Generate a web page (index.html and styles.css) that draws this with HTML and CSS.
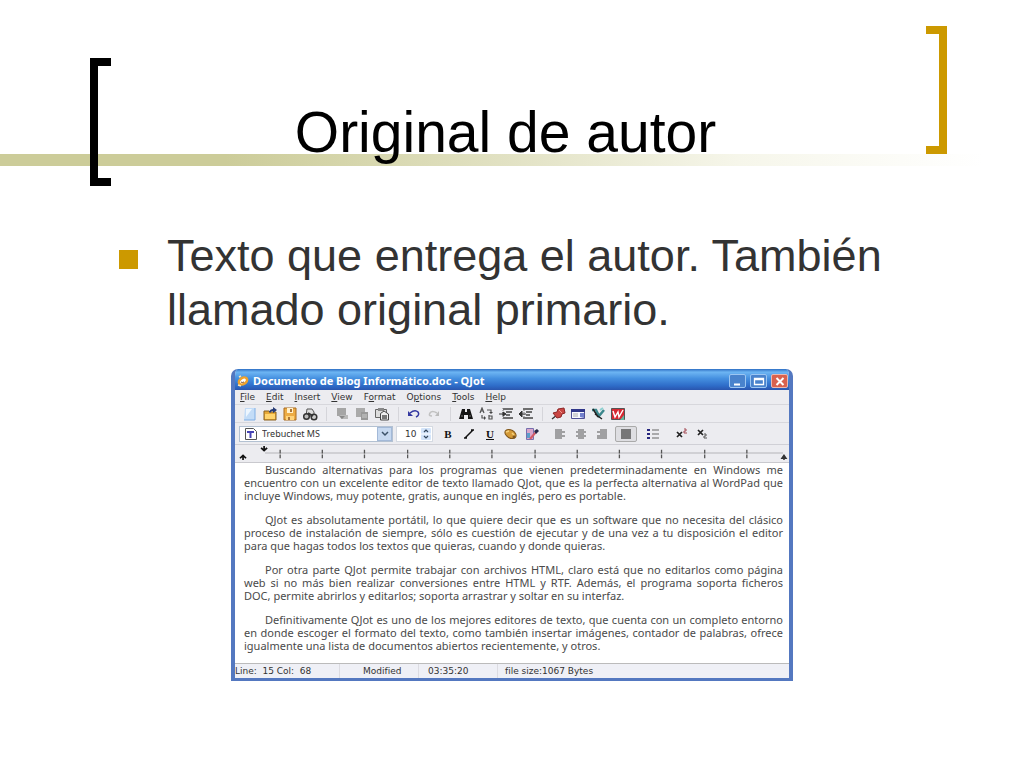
FILE: index.html
```html
<!DOCTYPE html>
<html lang="es">
<head>
<meta charset="utf-8">
<title>Original de autor</title>
<link rel="stylesheet" href="styles.css">
</head>
<body>
<main class="slide">
  <header class="slide-header">
    <span class="bracket bracket-left"></span>
    <h1>Original de autor</h1>
    <span class="bracket bracket-right"></span>
  </header>
  <ul class="points">
    <li>Texto que entrega el autor. También<br>llamado original primario.</li>
  </ul>
  <section class="window" aria-label="QJot">
    <div class="titlebar">
      <svg class="logo" width="14" height="14" viewBox="0 0 14 14"><ellipse cx="7" cy="7" rx="4.500" ry="3" transform="rotate(-35 7 7)" fill="#fff" stroke="#f0a22c" stroke-width="2.600"/><path d="M2 11l3 1M3 3l2-1" stroke="#ffe7b5" stroke-width="1.500"/><path d="M5 8q1 1 3 0" fill="none" stroke="#7c4a22"/></svg>
      <h2>Documento de Blog Informático.doc - QJot</h2>
      <button class="win" aria-label="Minimizar"><svg width="16" height="13"><path d="M4 9.500h6" stroke="#fff" stroke-width="2"/></svg></button>
      <button class="win" aria-label="Maximizar"><svg width="16" height="13"><path d="M3.500 3.500h9v6h-9zM3 4.500h10" fill="none" stroke="#fff" stroke-width="1.300"/></svg></button>
      <button class="win close" aria-label="Cerrar"><svg width="16" height="13"><path d="M4.500 3l7 7m0-7l-7 7" stroke="#fff" stroke-width="2"/></svg></button>
    </div>
    <nav class="menu">
      <button><u>F</u>ile</button><button><u>E</u>dit</button><button><u>I</u>nsert</button><button><u>V</u>iew</button><button>F<u>o</u>rmat</button><button>O<u>p</u>tions</button><button><u>T</u>ools</button><button><u>H</u>elp</button>
    </nav>
    <div class="toolbar files">
      <div class="group">
        <button aria-label="Nuevo"><svg viewBox="0 0 16 14"><path d="M3 1h10v12H2z" fill="#c3dcf7"/><path d="M4 2h6l-6 8z" fill="#edf6ff"/><path d="M13 1v12H2" fill="none" stroke="#7eaee4"/></svg></button>
        <button aria-label="Abrir"><svg viewBox="0 0 16 14"><path d="M2 4h5l1 1h6v8H2z" fill="#e7a936" stroke="#89611f"/><path d="M3 7h10v5H3z" fill="#ffd46d"/><path d="M7 5q1-3 4-3V0l4 3-4 3V4q-2 0-3 2z" fill="#263b75"/></svg></button>
        <button aria-label="Guardar"><svg viewBox="0 0 16 14"><path d="M2 1h12v12H2z" fill="#edac45" stroke="#a86b20"/><path d="M5 1h6v5H5z" fill="#fff0cd"/><path d="M4 9h8v4H4z" fill="#ffd47c"/><path d="M8 2h2v3H8zM6 10h2v3H6z" fill="#a77438"/></svg></button>
        <button aria-label="Buscar archivo"><svg viewBox="0 0 16 14"><path d="M5 2h5l2 3v4H4z" fill="#ddd" stroke="#555"/><circle cx="4.500" cy="9.500" r="2.800" fill="#bbb" stroke="#333" stroke-width="1.500"/><circle cx="12" cy="10" r="2.800" fill="#ccc" stroke="#333" stroke-width="1.500"/><path d="M6 6l5 3" stroke="#333" stroke-width="2"/></svg></button>
      </div>
      <div class="group">
        <button aria-label="Cortar"><svg viewBox="0 0 16 14"><path d="M3 1h9v8H3z" fill="#a5a5a5"/><path d="M6 8h8v4H7z" fill="#b9b9b9"/><path d="M5 9l3 3 3-3" fill="#888"/></svg></button>
        <button aria-label="Copiar"><svg viewBox="0 0 16 14"><path d="M2 1h9v9H2z" fill="#aaa"/><path d="M7 5h7v8H7z" fill="#999"/><path d="M8 8h5m-5 2h5" stroke="#ccc"/></svg></button>
        <button aria-label="Pegar"><svg viewBox="0 0 16 14"><path d="M1.500 2.500h11v8h-11z" fill="#ddd" stroke="#666"/><path d="M4 1h6v3H4z" fill="#888"/><path d="M6.500 6.500L10 4l4.500 3v6h-8z" fill="#eee" stroke="#444"/><path d="M8 8h5v4H8z" fill="#777"/></svg></button>
      </div>
      <div class="group">
        <button aria-label="Deshacer"><svg viewBox="0 0 16 14"><path d="M4 6q5-4 8-1 2 3-2 5" fill="none" stroke="#3438a0" stroke-width="1.500"/><path d="M2 4v5h5z" fill="#3438a0"/></svg></button>
        <button aria-label="Rehacer"><svg viewBox="0 0 16 14"><path d="M11 6Q6 3 4 6t2 3" fill="none" stroke="#c2c2c2" stroke-width="1.500"/><path d="M13 4v5H9z" fill="#bbb"/></svg></button>
      </div>
      <div class="group">
        <button aria-label="Buscar"><svg viewBox="0 0 16 14"><path d="M4 2h3v3h2V2h3l3 10h-5V8H6v4H1z" fill="#151515"/><path d="M3 9h2m6 0h2" stroke="#777"/></svg></button>
        <button aria-label="Reemplazar"><svg viewBox="0 0 16 14"><path d="M2 6l2-5 2 5M3 4h2M9 3h4v3M4 8v3h3M11 8v4h3V9h-3" fill="none" stroke="#555" stroke-width="1.200"/><path d="M11 5h4l-2 2zM6 9v4l2-2z" fill="#444"/></svg></button>
        <button aria-label="Aumentar sangría"><svg viewBox="0 0 16 14"><path d="M5 2h10M8 5h6M8 8h4M5 11h10" stroke="#444" stroke-width="1.600"/><path d="M5 1v12" stroke="#777" stroke-dasharray="1 1"/><path d="M1 7h6M5 5l3 2-3 2z" fill="#333" stroke="#333"/></svg></button>
        <button aria-label="Reducir sangría"><svg viewBox="0 0 16 14"><path d="M5 2h10M8 5h6M8 8h4M5 11h10" stroke="#444" stroke-width="1.600"/><path d="M6 1v12" stroke="#777" stroke-dasharray="1 1"/><path d="M2 7h6M4 4L1 7l3 3z" fill="#333" stroke="#333"/></svg></button>
      </div>
      <div class="group last">
        <button aria-label="Fijar"><svg viewBox="0 0 16 14"><path d="M2 12l5-4" stroke="#333" stroke-width="1.500"/><path d="M8 2l6-1 1 5-3 1-1 3-4 1-4-5 4-1z" fill="#c94643" stroke="#8e2727"/><path d="M9 3l3 3" stroke="#f29a91"/></svg></button>
        <button aria-label="Fecha"><svg viewBox="0 0 16 14"><path d="M1.500 2.500h13v9h-13z" fill="#f8f8ff" stroke="#505095"/><path d="M1 2h14v3H1z" fill="#30378a"/><path d="M3 7h5m-5 2h5" stroke="#aaa"/><path d="M10 6h4v5l-4-1z" fill="#7381ce"/></svg></button>
        <button aria-label="Opciones"><svg viewBox="0 0 16 14"><path d="M2 3h4l3 6 5-6" fill="none" stroke="#3b878c" stroke-width="2.500"/><path d="M5 7l7 5M3 2l5 8" stroke="#222" stroke-width="1.500"/><path d="M10 3l3-2" stroke="#8bd0d0" stroke-width="2"/></svg></button>
        <button aria-label="WordPad"><svg viewBox="0 0 16 14"><path d="M1.500 1.500h13v11h-13z" fill="#d72932" stroke="#555"/><path d="M10 13l4-5v5z" fill="#64b9a2"/><path d="M3 4l2 6 3-5 1 5 4-7" fill="none" stroke="#fff" stroke-width="1.400"/></svg></button>
      </div>
    </div>
    <div class="toolbar format">
      <label class="font-box"><svg viewBox="0 0 16 14"><path d="M2.500 1.500h8l3 3v8h-11z" fill="#fff" stroke="#555"/><path d="M4 5h7M7.500 5v6" stroke="#4643b4" stroke-width="2"/></svg><select aria-label="Fuente"><option>Trebuchet MS</option></select><span class="drop"><svg viewBox="0 0 12 12"><path d="M3 4l3 3 3-3" fill="none" stroke="#3c5269" stroke-width="1.500"/></svg></span></label>
      <label class="size-box"><input aria-label="Tamaño" value="10"><svg viewBox="0 0 12 14"><rect x="1" y="1" width="10" height="12" rx="1" fill="#d3e4fa"/><path d="M1 7h10" stroke="#fff"/><path d="M4 5l2-2 2 2M4 9l2 2 2-2" fill="none" stroke="#34475c" stroke-width="1.200"/></svg></label>
      <div class="group marks">
        <button class="bold">B</button>
        <button aria-label="Cursiva"><svg viewBox="0 0 16 14"><path d="M4 11L12 3M3 11h3M10 3h3" stroke="#111" stroke-width="1.500"/></svg></button>
        <button class="underline">U</button>
        <button aria-label="Color"><svg viewBox="0 0 16 14"><ellipse cx="7.500" cy="7" rx="6" ry="4" transform="rotate(30 7.500 7)" fill="#d49a37" stroke="#81571c"/><path d="M3 5l3-1m3 2l2 2" stroke="#f5d07d" stroke-width="1.500"/><circle cx="11" cy="10" r="1.500" fill="#7c5522"/></svg></button>
        <button aria-label="Copiar formato"><svg viewBox="0 0 16 14"><path d="M2.500 1.500h7v11h-7z" fill="#d9a6cb" stroke="#7770af"/><path d="M3 6h3v5H3z" fill="#5c9ecb"/><path d="M6 12l6-7" stroke="#d35b67" stroke-width="2"/><path d="M10 4l3-2 2 2-3 3z" fill="#252546"/></svg></button>
      </div>
      <div class="group aligns">
        <button aria-label="Izquierda"><svg viewBox="0 0 16 14"><path d="M3 3h7M3 5h10M3 7h7M3 9h10M3 11h7" stroke="#555"/></svg></button>
        <button aria-label="Centrar"><svg viewBox="0 0 16 14"><path d="M5 3h6M3 5h10M5 7h6M3 9h10M5 11h6" stroke="#555"/></svg></button>
        <button aria-label="Derecha"><svg viewBox="0 0 16 14"><path d="M6 3h7M3 5h10M6 7h7M3 9h10M3 11h10" stroke="#555"/></svg></button>
        <button class="pressed" aria-label="Justificar" aria-pressed="true"><svg viewBox="0 0 16 14"><path d="M3 3h10M3 5h10M3 7h10M3 9h10M3 11h10" stroke="#555" stroke-width="1.300"/></svg></button>
      </div>
      <button aria-label="Lista"><svg viewBox="0 0 16 14"><path d="M2 3h3M2 7h3M2 11h3" stroke="#26267e" stroke-width="2"/><path d="M7 3h7M7 7h7M7 11h7" stroke="#666"/></svg></button>
      <div class="group scripts">
        <button aria-label="Superíndice"><svg viewBox="0 0 16 14"><path d="M3 5l5 5m0-5l-5 5" stroke="#222" stroke-width="1.700"/><path d="M10 2h2v2h-2v2h3" fill="none" stroke="#a34650"/></svg></button>
        <button aria-label="Subíndice"><svg viewBox="0 0 16 14"><path d="M3 3l5 5m0-5L3 8" stroke="#222" stroke-width="1.700"/><path d="M9 7h2v2H9v2h3" fill="none" stroke="#555"/></svg></button>
      </div>
    </div>
    <svg class="ruler" viewBox="0 0 552 18" preserveAspectRatio="none"><path d="M30 8.500h516" stroke="#b4b4b8"/><path d="M45 5v9M87 5v9M129 5v9M172 5v9M214 5v9M256 5v9M299 5v9M341 5v9M383 5v9M425 5v9M468 5v9M510 5v9" stroke="#555" stroke-width="1.300" stroke-dasharray="4 1"/><path d="M29 1v5m-3-3l3 3 3-3M8 16v-5m-3 3l3-3 3 3" fill="none" stroke="#111" stroke-width="1.700"/><path d="M547 16v-4m-2 2l2-3 2 3z" fill="#555" stroke="#333" stroke-width="1.500"/></svg>
    <article class="page">
      <p><span>Buscando alternativas para los programas que vienen predeterminadamente en Windows me</span><span>encuentro con un excelente editor de texto llamado QJot, que es la perfecta alternativa al WordPad que</span><span>incluye Windows, muy potente, gratis, aunque en inglés, pero es portable.</span></p>
      <p><span>QJot es absolutamente portátil, lo que quiere decir que es un software que no necesita del clásico</span><span>proceso de instalación de siempre, sólo es cuestión de ejecutar y de una vez a tu disposición el editor</span><span>para que hagas todos los textos que quieras, cuando y donde quieras.</span></p>
      <p><span>Por otra parte QJot permite trabajar con archivos HTML, claro está que no editarlos como página</span><span>web si no más bien realizar conversiones entre HTML y RTF. Además, el programa soporta ficheros</span><span>DOC, permite abrirlos y editarlos; soporta arrastrar y soltar en su interfaz.</span></p>
      <p><span>Definitivamente QJot es uno de los mejores editores de texto, que cuenta con un completo entorno</span><span>en donde escoger el formato del texto, como también insertar imágenes, contador de palabras, ofrece</span><span>igualmente una lista de documentos abiertos recientemente, y otros.</span></p>
    </article>
    <footer class="status"><span>Line:&nbsp; 15 Col:&nbsp; 68</span><span>Modified</span><span>03:35:20</span><span>file size:1067 Bytes</span></footer>
  </section>
</main>
</body>
</html>
```

FILE: styles.css
```css
* { box-sizing: border-box; }
body { margin: 0; background: #fff; font-family: "Liberation Sans", Arial, sans-serif; }
button, input, select { font: inherit; color: inherit; border: 0; padding: 0; margin: 0; background: none; }
svg { display: block; }

.slide-header {
  display: flex;
  align-items: flex-start;
  padding: 26px 77px 0 90px;
  background: linear-gradient(to right, #cccc99 0, #cccc99 22%, #e2e2c4 50%, #f6f6ea 72%, #fff 96%) 0 154px / 100% 12px no-repeat;
}
.slide-header h1 {
  flex: 1;
  margin: 73px 26px 0 0;
  font-size: 57px;
  line-height: 66px;
  font-weight: 400;
  text-align: center;
}
.bracket { width: 21px; height: 128px; border: 8px solid #000; }
.bracket-left { margin-top: 32px; border-right: 0; }
.bracket-right { border-color: #cc9900; border-left: 0; }

.points { list-style: none; margin: 43px 77px 0 119px; padding: 0; color: #333; font-size: 45px; line-height: 54px; }
.points li { padding-left: 48px; background: linear-gradient(#cc9900, #cc9900) 0 21px / 19px 19px no-repeat; }

.window {
  width: 55%;
  min-width: 560px;
  max-width: 562px;
  margin: 32px auto 48px;
  border: solid #5478c0;
  border-width: 0 4px 3px;
  border-radius: 7px 7px 0 0;
  background: #ececf0;
  color: #333;
  font: 9px/12px "DejaVu Sans", sans-serif;
  overflow: hidden;
}
.titlebar {
  display: flex;
  align-items: center;
  gap: 4px;
  height: 21px;
  margin: 0 -4px;
  padding: 2px 5px 0;
  background: linear-gradient(#2e6fc4, #6db5f3 15%, #4590e0 45%, #2e6cc8 80%, #2a55ae);
  color: #fff;
}
.titlebar h2 { flex: 1; margin: 0 0 0 -1px; font: 700 11px/14px "Noto Sans", sans-serif; }
.win { width: 17px; height: 14px; border: 1px solid #9cc6f2; border-radius: 2px; background: #4983cd; }
.close { border-color: #eab8b0; background: #d9624e; }
.menu { display: flex; gap: 11px; height: 14px; padding: 1px 5px; }

.toolbar { display: flex; align-items: center; border-top: 1px solid #d7d7dc; }
.toolbar svg { width: 16px; height: 14px; }
.group { display: flex; gap: 5px; }
.files { height: 18px; padding-left: 7px; }
.files .group { gap: 4px; padding-right: 8px; margin-right: 7px; border-right: 1px solid #d5d5da; }
.files .last { border: 0; }
.format { height: 23px; padding-left: 4px; border-bottom: 1px solid #d0d0d6; }
.font-box, .size-box { display: flex; align-items: center; height: 16px; background: #fff; border: 1px solid #b3c1d2; }
.font-box { width: 154px; padding-left: 3px; }
.font-box select { flex: 1; appearance: none; margin-left: 3px; font: 9px/12px "Noto Sans", sans-serif; }
.drop { display: flex; align-items: center; justify-content: center; width: 15px; height: 14px; background: #c7d9f0; border: 1px solid #a3b9d8; }
.drop svg { width: 12px; height: 12px; }
.size-box { width: 37px; margin-left: 3px; border-color: #d5dae2; }
.size-box input { flex: 1; width: 0; padding-left: 8px; }
.size-box svg { width: 12px; }
.marks { margin-left: 7px; }
.bold, .underline { width: 16px; font: 700 11px/14px "Liberation Serif", serif; color: #111; }
.underline { text-decoration: underline; }
.aligns { margin-left: 12px; align-items: center; }
.pressed { padding: 0 2px; border: 1px solid #aaa; border-radius: 2px; background: #dedee2; }
.format > button { margin-left: 8px; }
.scripts { margin-left: 13px; }
.ruler { width: 100%; height: 17px; }

.page {
  background: #fff;
  border-top: 1px solid #c9c9ce;
  border-bottom: 1px solid #bbb;
  padding: 0 6px 11px 9px;
  color: #4a4a4a;
  font: 11px/13px "Noto Sans", sans-serif;
}
.page p { margin: 0 0 11px; }
.page p:last-child { margin: 0; }
.page span { display: block; white-space: nowrap; text-align-last: justify; }
.page span:first-child { padding-left: 21px; }
.page span:last-child { text-align-last: left; }
.status { display: grid; grid-template-columns: 104px 79px 79px 1fr; height: 14px; line-height: 14px; background: #eff0f6; }
.status span + span { padding-left: 23px; border-left: 1px solid #dcdce2; }
.status span:nth-child(3) { padding-left: 9px; }
.status span:nth-child(4) { padding-left: 7px; }
```
